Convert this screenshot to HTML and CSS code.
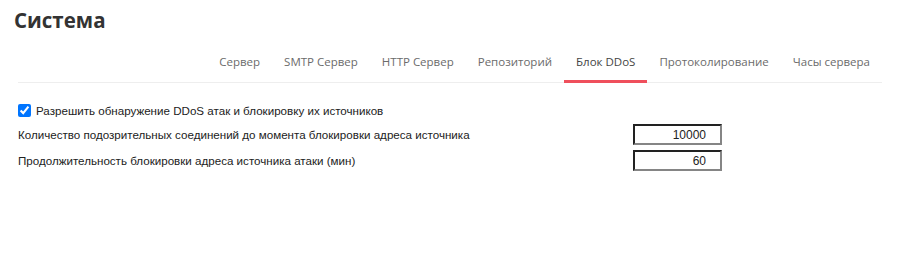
FILE: index.html
```html
<!DOCTYPE html>
<html lang="ru">

<head>
    <meta charset="UTF-8" />
    <title>Система</title>
    <link rel="stylesheet" href="styles.css">
</head>

<body>

    <div class="page">
        <h1 class="title">Система</h1>

        <!-- Вкладки -->
        <nav class="tabs">
            <a class="tab" href="#">Сервер</a>
            <a class="tab" href="#">SMTP Сервер</a>
            <a class="tab" href="#">HTTP Сервер</a>
            <a class="tab" href="#">Репозиторий</a>
            <a class="tab active" href="#">Блок DDoS</a>
            <a class="tab" href="#">Протоколирование</a>
            <a class="tab" href="#">Часы сервера</a>
        </nav>

        <!-- Настройки блокировки -->
        <div class="settings">
            <label class="check-row">
                <input type="checkbox" checked>
                Разрешить обнаружение DDoS атак и блокировку их источников
            </label>

            <div class="field-row">
                <span>Количество подозрительных соединений до момента блокировки адреса источника</span>
                <input class="num-input" type="text" value="10000">
            </div>

            <div class="field-row">
                <span>Продолжительность блокировки адреса источника атаки (мин)</span>
                <input class="num-input" type="text" value="60">
            </div>
        </div>
    </div>

</body>

</html>
```

FILE: styles.css
```css
body {
    margin: 0;
    font-family: "Liberation Sans", Arial, sans-serif;
    background: #fff;
}

.page {
    padding: 0 18px;
}

/* Заголовок */
.title {
    font-family: "Open Sans", sans-serif;
    font-weight: 700;
    font-size: 20.5px;
    line-height: 28px;
    color: #333;
    margin: 6px 0 0 -4px;
}

/* Вкладки */
.tabs {
    display: flex;
    justify-content: flex-end;
    margin-top: 19px;
    border-bottom: 1px solid #eee;
}

.tab {
    font-family: "Open Sans", sans-serif;
    font-size: 11.5px;
    line-height: 18px;
    color: #6b6b6b;
    text-decoration: none;
    padding: 0 12px 9px;
    border-bottom: 3px solid transparent;
    margin-bottom: -1px;
}

.tab.active {
    color: #444;
    border-bottom-color: #ef4f5c;
}

/* Настройки */
.settings {
    display: flex;
    flex-direction: column;
    gap: 5px;
    padding-top: 15px;
    font-size: 11.6px;
    color: #222;
}

.check-row {
    display: flex;
    align-items: center;
    min-height: 21px;
    padding-top: 2px;
    margin-bottom: -2px;
}

.check-row input {
    width: 13px;
    height: 13px;
    margin: 0 5px 0 0;
}

.field-row {
    display: grid;
    grid-template-columns: 615px 89px;
    align-items: center;
    min-height: 21px;
}

.num-input {
    box-sizing: border-box;
    width: 89px;
    height: 21px;
    padding: 1px 14px 1px 2px;
    border: 2px solid;
    border-color: #222 #858585 #858585 #222;
    font-family: "Liberation Sans", Arial, sans-serif;
    font-size: 12px;
    color: #222;
    text-align: right;
}
```
